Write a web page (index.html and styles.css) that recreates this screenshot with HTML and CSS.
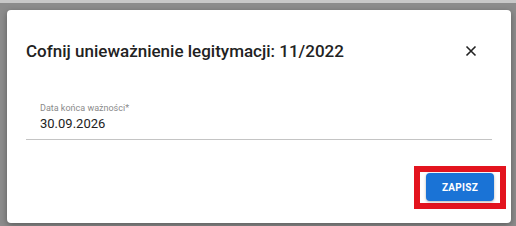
FILE: index.html
```html
<!DOCTYPE html>
<html lang="pl">
<head>
    <meta charset="UTF-8">
    <meta name="viewport" content="width=device-width, initial-scale=1.0">
    <title>Cofnij unieważnienie</title>
    <link rel="stylesheet" href="styles.css">
</head>
<body>

    <div class="dialog">
        <div class="header">
            <span class="title">Cofnij unieważnienie legitymacji: 11/2022</span>
            <a class="close" href="">
                <svg width="12" height="12" viewBox="0 0 12 12">
                    <path d="M1.5 1.5 L10.5 10.5 M10.5 1.5 L1.5 10.5" stroke="#222" stroke-width="1.6" fill="none"/>
                </svg>
            </a>
        </div>

        <div class="field">
            <label>Data końca ważności*</label>
            <div class="value">30.09.2026</div>
        </div>

        <div class="actions">
            <div class="highlight">
                <button class="save">ZAPISZ</button>
            </div>
        </div>
    </div>

</body>
</html>
```

FILE: styles.css
```css
*{
    box-sizing: border-box;
}
html, body{
    width: 100%;
    height: 100%;
    overflow: hidden;
    padding: 0;
    margin: 0;
}

body{
    font-family: Roboto, 'Liberation Sans', sans-serif;
    background-color: #8c8c8c;
    border-top: 3px solid #c8c8c8;
}

.dialog{
    margin: 7px 0 0 7px;
    width: 504px;
    height: 213px;
    background: white;
    border-radius: 4px;
    box-shadow: 0 2px 6px rgba(0,0,0,.35);
    display: flex;
    flex-direction: column;
}

.header{
    display: flex;
    justify-content: space-between;
    align-items: center;
    padding: 31px 34px 0 19px;
}
.title{
    font-size: 17px;
    font-weight: 500;
    color: #222;
}
.close{
    display: flex;
}

.field{
    margin: 42px 19px 0 19px;
    padding: 0 14px 8px;
    border-bottom: 1px solid #c4c4c4;
}
.field label{
    display: block;
    font-size: 9px;
    color: #8a8a8a;
}
.field .value{
    font-size: 13px;
    color: #222;
    margin-top: 3px;
}

.actions{
    display: flex;
    justify-content: flex-end;
    padding: 26px 5px 0 0;
}
.highlight{
    border: 6px solid #e3141e;
    padding: 1px 6px 2px;
}
.save{
    display: block;
    width: 68px;
    height: 28px;
    border: none;
    border-radius: 4px;
    background: #1a73d6;
    color: white;
    font-family: Roboto, 'Liberation Sans', sans-serif;
    font-size: 10px;
    font-weight: 700;
    letter-spacing: .3px;
    box-shadow: 0 1px 3px rgba(0,0,0,.3);
}
```
